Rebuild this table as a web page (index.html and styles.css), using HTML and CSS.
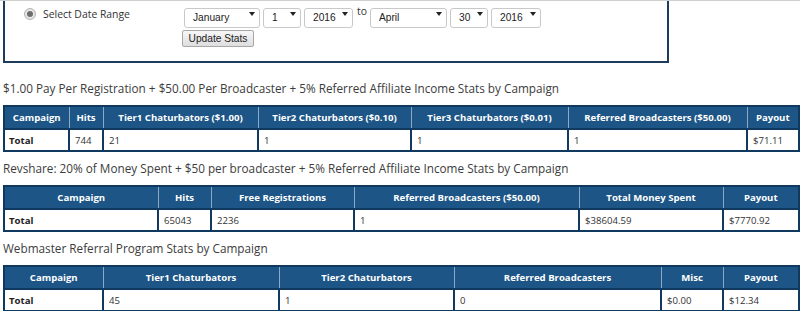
FILE: index.html
```html
<!DOCTYPE html>
<html lang="en">
<head>
<meta charset="utf-8">
<title>Affiliate Stats</title>
<link rel="stylesheet" href="styles.css">
</head>
<body>
<div class="topline"></div>
<div class="page">
  <div class="range-box">
    <div class="range-label">
      <span class="radio"><span class="radio-dot"></span></span>
      <span>Select Date Range</span>
    </div>
    <div class="range-controls">
      <div class="date-row">
        <span class="sel sel-month"><select><option>January</option></select></span>
        <span class="sel sel-day"><select><option>1</option></select></span>
        <span class="sel sel-year"><select><option>2016</option></select></span>
        <span class="to">to</span>
        <span class="sel sel-month2"><select><option>April</option></select></span>
        <span class="sel sel-day"><select><option>30</option></select></span>
        <span class="sel sel-year2"><select><option>2016</option></select></span>
      </div>
      <button class="update-btn" type="button">Update Stats</button>
    </div>
  </div>

  <h3 class="section-title">$1.00 Pay Per Registration + $50.00 Per Broadcaster + 5% Referred Affiliate Income Stats by Campaign</h3>
  <table class="stats stats-a">
    <colgroup><col><col><col><col><col><col><col></colgroup>
    <tr>
      <th>Campaign</th><th>Hits</th><th>Tier1 Chaturbators ($1.00)</th><th>Tier2 Chaturbators ($0.10)</th><th>Tier3 Chaturbators ($0.01)</th><th>Referred Broadcasters ($50.00)</th><th>Payout</th>
    </tr>
    <tr>
      <td class="total">Total</td><td>744</td><td>21</td><td>1</td><td>1</td><td>1</td><td>$71.11</td>
    </tr>
  </table>

  <h3 class="section-title">Revshare: 20% of Money Spent + $50 per broadcaster + 5% Referred Affiliate Income Stats by Campaign</h3>
  <table class="stats stats-b">
    <colgroup><col><col><col><col><col><col></colgroup>
    <tr>
      <th>Campaign</th><th>Hits</th><th>Free Registrations</th><th>Referred Broadcasters ($50.00)</th><th>Total Money Spent</th><th>Payout</th>
    </tr>
    <tr>
      <td class="total">Total</td><td>65043</td><td>2236</td><td>1</td><td>$38604.59</td><td>$7770.92</td>
    </tr>
  </table>

  <h3 class="section-title">Webmaster Referral Program Stats by Campaign</h3>
  <table class="stats stats-c">
    <colgroup><col><col><col><col><col><col></colgroup>
    <tr>
      <th>Campaign</th><th>Tier1 Chaturbators</th><th>Tier2 Chaturbators</th><th>Referred Broadcasters</th><th>Misc</th><th>Payout</th>
    </tr>
    <tr>
      <td class="total">Total</td><td>45</td><td>1</td><td>0</td><td>$0.00</td><td>$12.34</td>
    </tr>
  </table>
</div>
</body>
</html>
```

FILE: styles.css
```css
html, body {
  margin: 0;
  padding: 0;
  background: #ffffff;
}

body {
  font-family: "Open Sans", "Noto Sans", sans-serif;
  color: #3a3a3a;
}

.topline {
  height: 1px;
  background: #cfcfcf;
}

.page {
  padding: 0 2px 0 3px;
}

/* ---------- date range box ---------- */
.range-box {
  width: 666px;
  box-sizing: border-box;
  border: 2px solid #1d3b5b;
  border-top: none;
  display: grid;
  grid-template-columns: 158px auto;
  padding: 3px 0 14px 19px;
  margin-bottom: 15px;
}

.range-label {
  display: flex;
  align-items: center;
  gap: 7px;
  height: 20px;
  font-size: 10.4px;
  color: #333;
}

.radio {
  width: 12px;
  height: 12px;
  box-sizing: border-box;
  border-radius: 50%;
  border: 1px solid #b3b3b3;
  background: radial-gradient(circle, #f4f4f4 0%, #dcdcdc 100%);
  display: flex;
  align-items: center;
  justify-content: center;
}

.radio-dot {
  width: 6px;
  height: 6px;
  border-radius: 50%;
  background: #6d6d6d;
}

.range-controls {
  display: flex;
  flex-direction: column;
  align-items: flex-start;
  gap: 6px;
}

.date-row {
  display: flex;
  align-items: flex-start;
  gap: 3px;
  margin-left: 2px;
}

.sel {
  position: relative;
  display: block;
  height: 20px;
}

.sel select {
  -webkit-appearance: none;
  appearance: none;
  width: 100%;
  height: 20px;
  box-sizing: border-box;
  border: 1px solid #c9c9c9;
  border-radius: 3px;
  background: #ffffff;
  padding: 0 0 0 8px;
  margin: 0;
  font-family: "Liberation Sans", Arial, sans-serif;
  font-size: 10.2px;
  color: #222;
  outline: none;
}

.sel::after {
  content: "";
  position: absolute;
  right: 5px;
  top: 8px;
  border-left: 3px solid transparent;
  border-right: 3px solid transparent;
  border-top: 4px solid #222;
  pointer-events: none;
}

.sel-month { width: 76px; }
.sel-month2 { width: 77px; }
.sel-day { width: 38px; }
.sel-year { width: 49px; }
.sel-year2 { width: 50px; }

.to {
  font-size: 10.4px;
  line-height: 14px;
  color: #333;
  margin: 0 0 0 1px;
}

.update-btn {
  width: 72px;
  height: 17px;
  box-sizing: border-box;
  padding: 0;
  border: 1px solid #a8a8a8;
  border-radius: 2px;
  background: linear-gradient(#f7f7f7, #dedede);
  font-family: "Liberation Sans", Arial, sans-serif;
  font-size: 10.2px;
  color: #222;
}

/* ---------- section titles ---------- */
.section-title {
  margin: 6px 0 7px 0;
  font-size: 11.75px;
  line-height: 20px;
  font-weight: 400;
  color: #3c3c3c;
}

/* ---------- stats tables ---------- */
.stats {
  width: 100%;
  border-collapse: collapse;
  table-layout: fixed;
  border: 2px solid #10395f;
  font-size: 9.6px;
}

.stats th {
  background: #1c5586;
  color: #ffffff;
  font-weight: 700;
  text-align: center;
  height: 21px;
  padding: 0 3px;
  border-left: 1px solid #8ea9c3;
  border-right: 1px solid #8ea9c3;
  border-bottom: 2px solid #10395f;
  white-space: nowrap;
}

.stats td {
  height: 20px;
  padding: 0 5px;
  border: 2px solid #10395f;
  color: #333;
  background: #fff;
  white-space: nowrap;
}

.stats td.total {
  font-weight: 700;
  color: #222;
  padding-left: 4px;
}

.stats-a col:nth-child(1) { width: 65px; }
.stats-a col:nth-child(2) { width: 34px; }
.stats-a col:nth-child(3) { width: 155px; }
.stats-a col:nth-child(4) { width: 153px; }
.stats-a col:nth-child(5) { width: 157px; }
.stats-a col:nth-child(6) { width: 179px; }
.stats-a col:nth-child(7) { width: 52px; }

.stats-b col:nth-child(1) { width: 154px; }
.stats-b col:nth-child(2) { width: 53px; }
.stats-b col:nth-child(3) { width: 143px; }
.stats-b col:nth-child(4) { width: 225px; }
.stats-b col:nth-child(5) { width: 144px; }
.stats-b col:nth-child(6) { width: 76px; }

.stats-c col:nth-child(1) { width: 99px; }
.stats-c col:nth-child(2) { width: 176px; }
.stats-c col:nth-child(3) { width: 175px; }
.stats-c col:nth-child(4) { width: 207px; }
.stats-c col:nth-child(5) { width: 62px; }
.stats-c col:nth-child(6) { width: 76px; }
```
